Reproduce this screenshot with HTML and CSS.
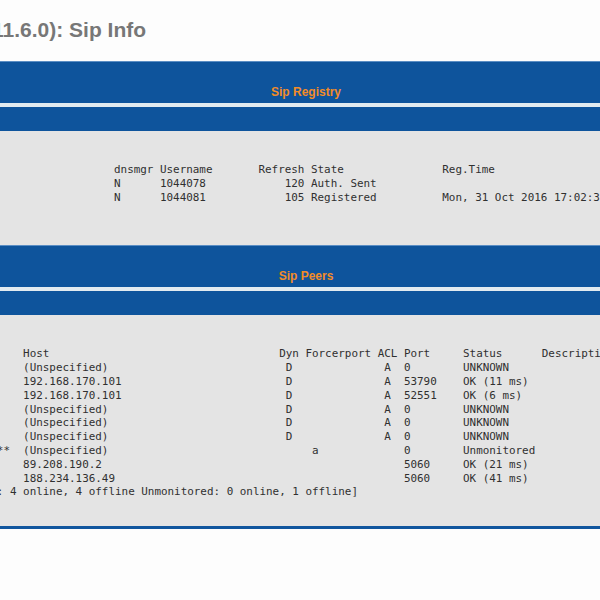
FILE: index.html
```html
<!DOCTYPE html>
<html>
<head>
<meta charset="utf-8">
<link rel="stylesheet" href="styles.css">
</head>
<body>
<div class="page">
  <div class="header"><h1 class="title">11.6.0): Sip Info</h1></div>

  <div class="band band-title">Sip Registry</div>
  <div class="stripe"></div>
  <div class="band band-sub"></div>
  <div class="panel panel-registry">
<pre class="mono registry">dnsmgr Username       Refresh State               Reg.Time
N      1044078            120 Auth. Sent
N      1044081            105 Registered          Mon, 31 Oct 2016 17:02:39</pre>
  </div>

  <div class="band band-title">Sip Peers</div>
  <div class="stripe"></div>
  <div class="band band-sub"></div>
  <div class="panel panel-peers">
<pre class="mono peers">    Host                                   Dyn Forcerport ACL Port     Status      Description
    (Unspecified)                           D              A  0        UNKNOWN
    192.168.170.101                         D              A  53790    OK (11 ms)
    192.168.170.101                         D              A  52551    OK (6 ms)
    (Unspecified)                           D              A  0        UNKNOWN
    (Unspecified)                           D              A  0        UNKNOWN
    (Unspecified)                           D              A  0        UNKNOWN
**  (Unspecified)                               a             0        Unmonitored
    89.208.190.2                                              5060     OK (21 ms)
    188.234.136.49                                            5060     OK (41 ms)
: 4 online, 4 offline Unmonitored: 0 online, 1 offline]</pre>
  </div>
</div>
</body>
</html>
```

FILE: styles.css
```css
html, body {
  margin: 0;
  padding: 0;
  background: #fdfdfd;
  overflow: hidden;
}

.page {
  width: 600px;
  overflow: hidden;
}

.header {
  height: 61px;
  box-sizing: border-box;
  padding-top: 18px;
  overflow: hidden;
}

.title {
  margin: 0 0 0 -8px;
  font-family: "Liberation Sans", Arial, sans-serif;
  font-weight: bold;
  font-size: 21px;
  line-height: 24px;
  color: #777777;
  white-space: nowrap;
}

.band {
  background: #0e549c;
}

.band-title {
  height: 42px;
  box-sizing: border-box;
  padding: 23px 0 4px 12px;
  text-align: center;
  font-family: "Liberation Sans", Arial, sans-serif;
  font-weight: bold;
  font-size: 12px;
  line-height: 15px;
  color: #f28c28;
  border-top: 1px solid #5b8ec4;
}

.stripe {
  height: 4px;
  background: #e2ebf0;
}

.band-sub {
  height: 24px;
}

.panel {
  background: #e4e4e4;
  overflow: hidden;
}

.panel-registry {
  padding: 32px 0 41px 114px;
}

.panel-peers {
  padding: 32px 0 27px 0;
  border-bottom: 3px solid #11569e;
}

.mono {
  margin: 0;
  font-family: "DejaVu Sans Mono", monospace;
  font-size: 10.92px;
  line-height: 13.8px;
  color: #303030;
  white-space: pre;
}

.peers {
  margin-left: -3.2px;
}
```
